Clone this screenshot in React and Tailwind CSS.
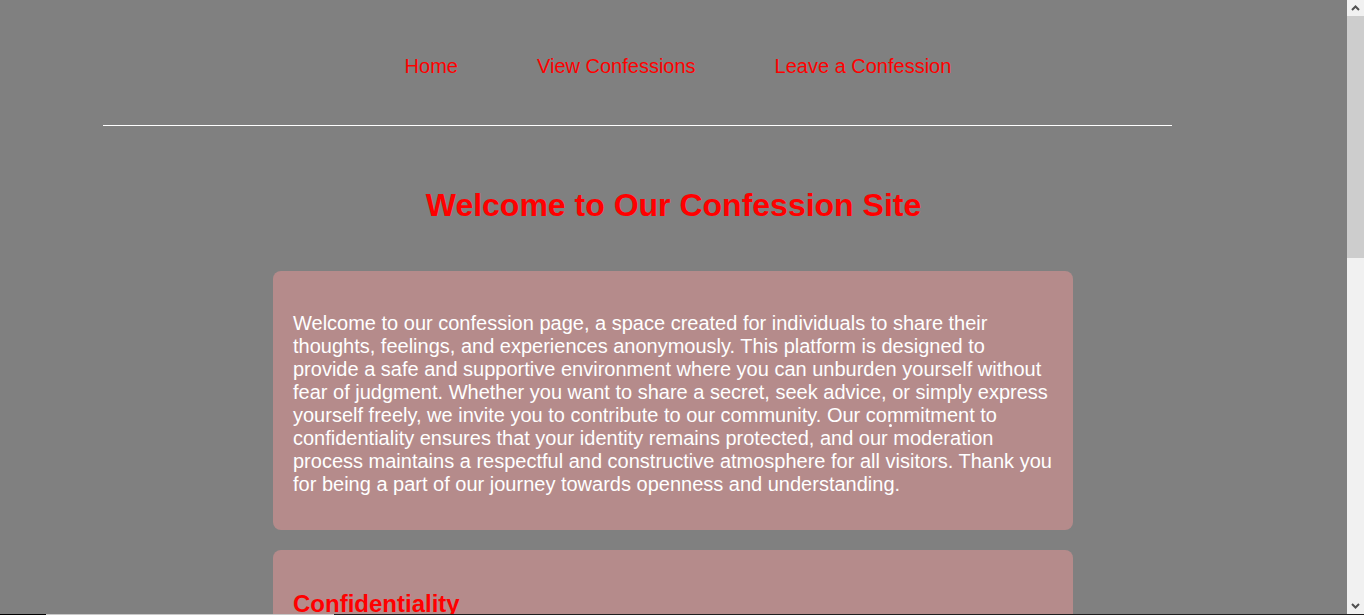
import React from "react";

const sections = [
  {
    title: "Confidentiality",
    text: "Your privacy is our highest priority. Every confession submitted to this site is stored without any personal information attached to it. We do not collect names, email addresses or any other details that could be used to identify you, so you can speak your mind with complete peace of mind.",
  },
  {
    title: "Community Guidelines",
    text: "To keep this space welcoming for everyone, we ask that all confessions remain respectful. Hateful language, harassment, threats and the sharing of other people's private information are not allowed. Our moderators review every submission before it appears on the site.",
  },
];

function Chevron({ up }) {
  return (
    <svg width="9" height="6" viewBox="0 0 9 6" className="block">
      <path
        d={up ? "M1 5 L4.5 1.5 L8 5" : "M1 1 L4.5 4.5 L8 1"}
        fill="none"
        stroke="#505050"
        strokeWidth="2"
      />
    </svg>
  );
}

export default function App() {
  return (
    <div
      className="h-screen flex flex-col overflow-hidden bg-[#808080]"
      style={{ fontFamily: '"Liberation Sans", Arial, sans-serif' }}
    >
      <div className="flex-1 flex min-h-0">
        <div className="flex-1 min-w-0 overflow-hidden">
          <nav className="pt-[55px] flex justify-center gap-[79px] pl-[9px] text-[20px] leading-[23px]">
            <a href="#" className="text-[#ff0000]">Home</a>
            <a href="#" className="text-[#ff0000]">View Confessions</a>
            <a href="#" className="text-[#ff0000]">Leave a Confession</a>
          </nav>
          <div className="mt-[47px] ml-[103px] w-[1069px] border-t border-white" />
          <h1 className="mt-[61px] text-center text-[32px] leading-[37px] font-bold text-[#ff0000]">
            Welcome to Our Confession Site
          </h1>
          <main className="mt-[47px] pr-[1px] flex flex-col items-center gap-[20px]">
            <section className="w-[800px] rounded-[8px] bg-[#b58b8b] px-[20px] pt-[41px] pb-[34px] relative">
              <p className="text-white text-[20px] leading-[23px]">
                Welcome to our confession page, a space created for individuals to share their thoughts, feelings, and experiences anonymously. This platform is designed to provide a safe and supportive environment where you can unburden yourself without fear of judgment. Whether you want to share a secret, seek advice, or simply express yourself freely, we invite you to contribute to our community. Our commitment to confidentiality ensures that your identity remains protected, and our moderation process maintains a respectful and constructive atmosphere for all visitors. Thank you for being a part of our journey towards openness and understanding.
              </p>
              <span className="absolute left-[616px] top-[153px] w-[3px] h-[3px] rounded-full bg-white" />
            </section>
            {sections.map((s) => (
              <section
                key={s.title}
                className="w-[800px] rounded-[8px] bg-[#b58b8b] px-[20px] pt-[40px] pb-[34px]"
              >
                <h2 className="text-[24px] leading-[28px] font-bold text-[#ff0000]">{s.title}</h2>
                <p className="mt-[20px] text-white text-[20px] leading-[23px]">{s.text}</p>
              </section>
            ))}
          </main>
        </div>
        <div className="w-[17px] shrink-0 flex flex-col bg-[#f1f1f1]">
          <div className="h-[16px] flex items-center justify-center">
            <Chevron up />
          </div>
          <div className="h-[242px] bg-[#cdcdcd]" />
          <div className="flex-1" />
          <div className="h-[16px] flex items-center justify-center">
            <Chevron />
          </div>
        </div>
      </div>
      <div className="h-px flex shrink-0">
        <div className="w-[46px] bg-black" />
        <div className="w-[288px] bg-[#c8c8c8]" />
        <div className="flex-1 bg-[#1e1e1e]" />
      </div>
    </div>
  );
}
